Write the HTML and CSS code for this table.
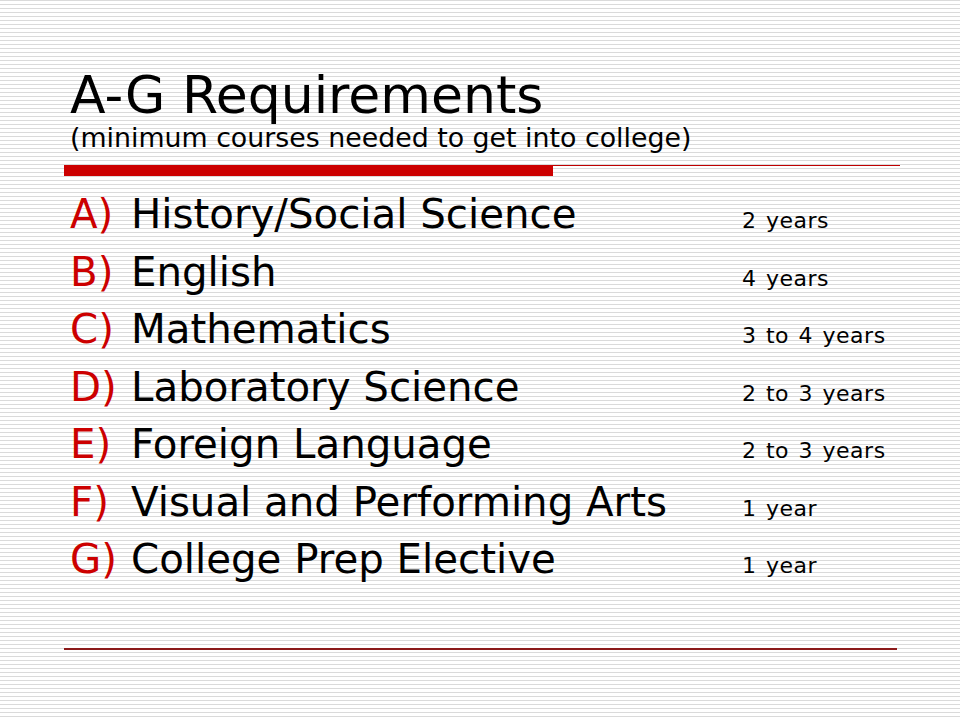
FILE: index.html
```html
<!DOCTYPE html>
<html>
<head>
<meta charset="utf-8">
<link rel="stylesheet" href="styles.css">
</head>
<body>
<main class="slide">
  <header class="head">
    <h1 class="title">A-G Requirements</h1>
    <p class="subtitle">(minimum courses needed to get into college)</p>
  </header>
  <div class="rule">
    <div class="rule-thick"></div>
    <div class="rule-thin"></div>
  </div>
  <ul class="list">
    <li class="row"><span class="letter">A)</span><span class="label">History/Social Science</span><span class="years">2 years</span></li>
    <li class="row"><span class="letter">B)</span><span class="label">English</span><span class="years">4 years</span></li>
    <li class="row"><span class="letter">C)</span><span class="label">Mathematics</span><span class="years">3 to 4 years</span></li>
    <li class="row"><span class="letter">D)</span><span class="label">Laboratory Science</span><span class="years">2 to 3 years</span></li>
    <li class="row"><span class="letter">E)</span><span class="label">Foreign Language</span><span class="years">2 to 3 years</span></li>
    <li class="row"><span class="letter">F)</span><span class="label">Visual and Performing Arts</span><span class="years">1 year</span></li>
    <li class="row"><span class="letter">G)</span><span class="label">College Prep Elective</span><span class="years">1 year</span></li>
  </ul>
  <div class="bottom-rule"></div>
</main>
</body>
</html>
```

FILE: styles.css
```css
html, body {
  margin: 0;
  padding: 0;
}
body {
  width: 960px;
  height: 720px;
  overflow: hidden;
  background: repeating-linear-gradient(to bottom, #dadada 0 1px, #ffffff 1px 4px);
  font-family: "DejaVu Sans", Verdana, sans-serif;
  color: #000;
}
.slide {
  display: flex;
  flex-direction: column;
  padding-top: 66px;
}
.head {
  padding-left: 70px;
}
.title {
  margin: 0;
  font-weight: normal;
  font-size: 52px;
  line-height: 58px;
}
.subtitle {
  margin: 0;
  font-size: 26.8px;
  line-height: 28px;
}
.rule {
  display: flex;
  align-items: flex-start;
  margin-top: 13px;
  margin-left: 64px;
  width: 836px;
}
.rule-thick {
  width: 489px;
  height: 11px;
  background: #cc0000;
}
.rule-thin {
  flex: 1;
  height: 1px;
  background: #c00000;
}
.list {
  list-style: none;
  margin: 10px 0 0;
  padding: 0 0 0 70px;
}
.row {
  display: grid;
  grid-template-columns: 61px 611px auto;
  align-items: baseline;
  height: 57.5px;
  line-height: 57.5px;
}
.letter {
  color: #cc0000;
  font-size: 40.3px;
}
.label {
  font-size: 40.3px;
}
.years {
  font-size: 22px;
  letter-spacing: 0.5px;
  word-spacing: 2px;
}
.bottom-rule {
  margin: 59px 0 0 64px;
  width: 833px;
  height: 2px;
  background: #8b1a1a;
}
```
